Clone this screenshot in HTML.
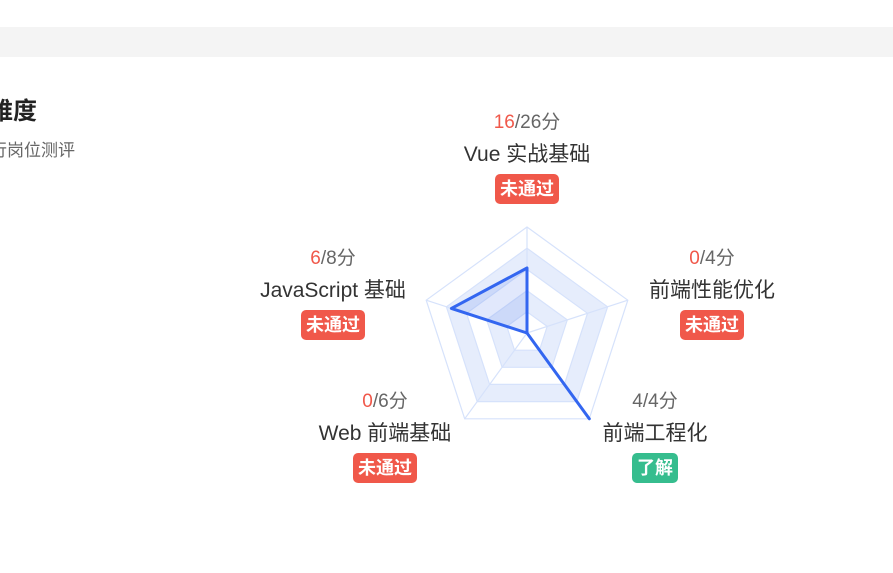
<!DOCTYPE html>
<html><head><meta charset="utf-8"><style>
body{margin:0;width:893px;height:573px;background:#fff;overflow:hidden;position:relative;font-family:"Liberation Sans","Noto Sans CJK SC",sans-serif;}
.band{position:absolute;left:0;top:27px;width:893px;height:30px;background:#f4f4f4;}
.t{position:absolute;left:-11px;top:91px;font-size:24px;font-weight:bold;color:#222;}
.s{position:absolute;right:818px;top:136px;font-size:17px;color:#666;white-space:nowrap;}
.g{position:absolute;width:260px;margin-left:-130px;text-align:center;}
.sc{font-size:19px;color:#666;height:24px;line-height:24px;}
.sc b{font-weight:normal;color:#f0584a;}
.nm{font-size:21px;color:#333;height:40px;line-height:40px;}
.bd{display:inline-block;margin-top:-1px;padding:0 5px;height:30px;line-height:30px;border-radius:5px;background:#f0584a;color:#fff;font-weight:bold;font-size:18px;}
.gr{background:#36bd8e;}
</style></head><body>
<div class="band"></div>
<div class="t">难度</div>
<div class="s">进行岗位测评</div>
<svg style="position:absolute;left:0;top:0" width="893" height="573">
<g fill="#e6edfc" stroke="none">
<path fill-rule="evenodd" d="M527,248.2 L607.6,306.8 L576.8,401.6 L477.2,401.6 L446.4,306.8Z M527,269.4 L587.5,313.3 L564.4,384.4 L489.6,384.4 L466.5,313.3Z"/>
<path fill-rule="evenodd" d="M527,290.6 L567.3,319.9 L551.9,367.3 L502.1,367.3 L486.7,319.9Z M527,311.8 L547.2,326.4 L539.5,350.2 L514.5,350.2 L506.8,326.4Z"/>
</g>
<g fill="none" stroke="#d6e2fb" stroke-width="1.2">
<path d="M527,227 L627.8,300.2 L589.3,418.8 L464.7,418.8 L426.2,300.2Z"/>
<path d="M527,248.2 L607.6,306.8 L576.8,401.6 L477.2,401.6 L446.4,306.8Z"/>
<path d="M527,269.4 L587.5,313.3 L564.4,384.4 L489.6,384.4 L466.5,313.3Z"/>
<path d="M527,290.6 L567.3,319.9 L551.9,367.3 L502.1,367.3 L486.7,319.9Z"/>
<path d="M527,311.8 L547.2,326.4 L539.5,350.2 L514.5,350.2 L506.8,326.4Z"/>
<path d="M527,333 L527,227 M527,333 L627.8,300.2 M527,333 L589.3,418.8 M527,333 L464.7,418.8 M527,333 L426.2,300.2"/>
</g>
<path d="M527,268 L527,333 L589.3,418.8 L527,333 L451.4,308.4Z" fill="rgba(90,130,240,0.18)" stroke="#3366f0" stroke-width="3" stroke-linejoin="round"/>
</svg>
<div class="g" style="left:527px;top:111px"><div class="sc"><b>16</b>/26分</div><div class="nm">Vue 实战基础</div><span class="bd">未通过</span></div>
<div class="g" style="left:333px;top:247px"><div class="sc"><b>6</b>/8分</div><div class="nm">JavaScript 基础</div><span class="bd">未通过</span></div>
<div class="g" style="left:712px;top:247px"><div class="sc"><b>0</b>/4分</div><div class="nm">前端性能优化</div><span class="bd">未通过</span></div>
<div class="g" style="left:655px;top:390px"><div class="sc">4/4分</div><div class="nm">前端工程化</div><span class="bd gr">了解</span></div>
<div class="g" style="left:385px;top:390px"><div class="sc"><b>0</b>/6分</div><div class="nm">Web 前端基础</div><span class="bd">未通过</span></div>
</body></html>
